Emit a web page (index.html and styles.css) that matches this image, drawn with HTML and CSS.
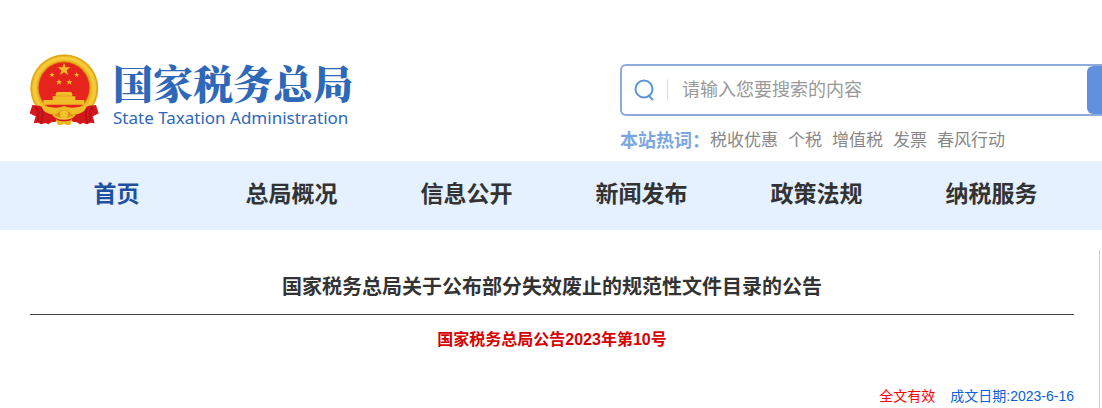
FILE: index.html
```html
<!DOCTYPE html>
<html lang="zh-CN">
<head>
    <meta charset="UTF-8">
    <meta name="viewport" content="width=device-width, initial-scale=1.0">
    <title>国家税务总局</title>
    <link rel="stylesheet" href="styles.css">
</head>
<body>

    <!-- 页头 -->
    <header class="header">
        <a href="#" class="logo">
            <svg class="emblem" viewBox="30 30 207 219" aria-hidden="true">
                <circle cx="133" cy="133" r="102" fill="#edb920"/>
                <circle cx="133" cy="133" r="99" fill="none" stroke="#dfa31b" stroke-width="3"/>
                <circle cx="133" cy="133" r="90" fill="none" stroke="#f4c93a" stroke-width="10"/>
                <circle cx="132" cy="131" r="79" fill="#d9920f"/>
                <circle cx="132" cy="131" r="76" fill="#e6231c"/>
                <g fill="#f0bd28">
                    <path d="M132 57l5 13 14 0-11 9 4 14-12-8-12 8 4-14-11-9 14 0z"/>
                    <path d="M96 84l2 6h6l-5 4 2 6-5-4-5 4 2-6-5-4h6z"/>
                    <path d="M170 84l2 6h6l-5 4 2 6-5-4-5 4 2-6-5-4h6z"/>
                    <path d="M117 105l2 6h7l-5 4 2 7-6-4-6 4 2-7-5-4h7z"/>
                    <path d="M148 105l2 6h7l-5 4 2 7-6-4-6 4 2-7-5-4h7z"/>
                    <path d="M110 144h44l4 8-3 5h11v11h27v14H70v-14h28v-11h11l-3-5z"/>
                </g>
                <path d="M108 156h48" stroke="#d8930f" stroke-width="2"/>
                <!-- 红绸 -->
                <path d="M37 183l22 2 18 8 31 2v38l-14 2-9 6-9-4-12 4-10-5-13 2 6-21-10-5-8-4z" fill="#d5171c"/>
                <path d="M228 183l-22 2-18 8-31 2v38l14 2 9 6 9-4 12 4 10-5 13 2-6-21 10-5 8-4z" fill="#d5171c"/>
                <path d="M46 188l10 14-2 30M66 192l2 22-6 24M219 188l-10 14 2 30M199 192l-2 22 6 24" fill="none" stroke="#ad0f16" stroke-width="4"/>
                <!-- 齿轮与麦穗 -->
                <path d="M62 183q22 7 43 8 15 1 27-5 12 6 27 5 21-1 44-8l-10 17q-16 12-34 12-16-1-27-13-11 12-27 13-18 0-34-12z" fill="#efbd25"/>
                <path d="M132 190q14 3 22 16l14 6-10 11q-12-2-26-2t-26 2l-10-11 14-6q8-13 22-16z" fill="#edb920"/>
                <path d="M102 213q8-1 15-9 6-6 15-6t15 6q7 8 15 9-16 8-30 8t-30-8z" fill="#d9920f"/>
                <circle cx="132" cy="210" r="12" fill="#f3c22b"/>
                <path d="M84 214l15 6 13 3-6 9-18-4zM181 214l-15 6-13 3 6 9 18-4z" fill="#d5171c"/>
                <path d="M107 224q25 9 50 0l-6 19h-11l-8-4-8 4h-11z" fill="#edb920"/>
                <path d="M110 226q22 7 44 0" fill="none" stroke="#d5171c" stroke-width="4"/>
            </svg>
            <span class="logo-text">
                <span class="logo-cn">国家税务总局</span>
                <span class="logo-en">State Taxation Administration</span>
            </span>
        </a>

        <div class="search">
            <form class="search-form">
                <label for="keyword" class="search-label" aria-label="搜索">
                    <svg width="22" height="24" viewBox="0 0 22 24" fill="none" stroke="#5d96dc" stroke-width="2">
                        <circle cx="10" cy="11" r="8.5"/>
                        <path d="M14 17l5 5"/>
                    </svg>
                </label>
                <input type="text" id="keyword" placeholder="请输入您要搜索的内容">
                <button type="submit" aria-label="搜索"></button>
            </form>
            <div class="hot-words">
                <strong>本站热词：</strong>
                <a href="#">税收优惠</a>
                <a href="#">个税</a>
                <a href="#">增值税</a>
                <a href="#">发票</a>
                <a href="#">春风行动</a>
            </div>
        </div>
    </header>

    <!-- 导航 -->
    <nav>
        <ul>
            <li><a href="#" class="active">首页</a></li>
            <li><a href="#">总局概况</a></li>
            <li><a href="#">信息公开</a></li>
            <li><a href="#">新闻发布</a></li>
            <li><a href="#">政策法规</a></li>
            <li><a href="#">纳税服务</a></li>
        </ul>
    </nav>

    <!-- 公告正文 -->
    <main class="article">
        <h1>国家税务总局关于公布部分失效废止的规范性文件目录的公告</h1>
        <h2>国家税务总局公告2023年第10号</h2>
        <div class="article-info">
            <span class="valid">全文有效</span>
            <span class="date">成文日期:2023-6-16</span>
        </div>
    </main>

</body>
</html>
```
FILE: styles.css
```css
* {
    box-sizing: border-box;
}

body {
    margin: 0;
    background: #fff;
    color: #333;
    font-family: "Liberation Sans", "Noto Sans CJK SC", sans-serif;
}

a {
    color: inherit;
    text-decoration: none;
}

/* 页头 */
.header {
    display: flex;
    justify-content: space-between;
    padding: 54px 0 7px 30px;
}

.logo {
    display: flex;
    gap: 14px;
    color: #2d68b9;
}

.emblem {
    width: 69px;
    height: 73px;
}

.logo-text {
    display: flex;
    flex-direction: column;
    padding-top: 6px;
}

.logo-cn {
    font-family: "Noto Serif CJK SC", "Noto Sans CJK SC", serif;
    font-size: 40px;
    font-weight: 900;
    line-height: 44px;
}

.logo-en {
    font-family: "Noto Sans", sans-serif;
    font-size: 17px;
    font-weight: 400;
    line-height: 28px;
}

.search {
    flex: 0 1 482px;
    padding-top: 10px;
}

.search-form {
    display: flex;
    height: 52px;
    border: 2px solid #8eabdc;
    border-right: 0;
    border-radius: 6px 0 0 6px;
}

.search-label {
    display: flex;
    align-items: center;
    width: 46px;
    margin: 13px 0;
    padding-left: 12px;
    border-right: 1px solid #ddd;
}

.search-form input {
    flex: 1;
    min-width: 0;
    padding: 0 14px;
    border: 0;
    outline: 0;
    background: none;
    font-family: inherit;
    font-size: 18px;
}

.search-form input::placeholder {
    color: #999;
}

.search-form button {
    width: 15px;
    padding: 0;
    border: 0;
    border-radius: 6px 0 0 6px;
    background: #6191de;
}

.hot-words {
    display: flex;
    gap: 10px;
    margin-top: 12px;
    color: #888;
    font-size: 17px;
    line-height: 26px;
}

.hot-words strong {
    margin-right: -10px;
    color: #7ba7e0;
    font-size: 18px;
}

/* 导航 */
nav {
    padding: 0 23px 3px 29px;
    background: #e6f1ff;
}

nav ul {
    display: grid;
    grid-template-columns: repeat(6, 1fr);
    margin: 0;
    padding: 0;
    list-style: none;
    text-align: center;
}

nav a {
    display: block;
    font-size: 23px;
    font-weight: bold;
    line-height: 66px;
}

nav .active {
    color: #1e50a2;
}

/* 公告正文 */
.article {
    margin: 20px 2px 0 30px;
    padding: 17px 25px 0 0;
    border-right: 1px solid #ccc;
    text-align: center;
}

.article h1 {
    margin: 0;
    padding-bottom: 7px;
    border-bottom: 1px solid #444;
    font-size: 20px;
    line-height: 40px;
}

.article h2 {
    margin: 13px 0 0;
    color: #d60000;
    font-size: 16px;
    line-height: 24px;
}

.article-info {
    display: flex;
    justify-content: flex-end;
    gap: 15px;
    margin-top: 32px;
    font-size: 14px;
    line-height: 24px;
}

.valid {
    color: #f00;
}

.date {
    color: #0a5fd6;
}
```
